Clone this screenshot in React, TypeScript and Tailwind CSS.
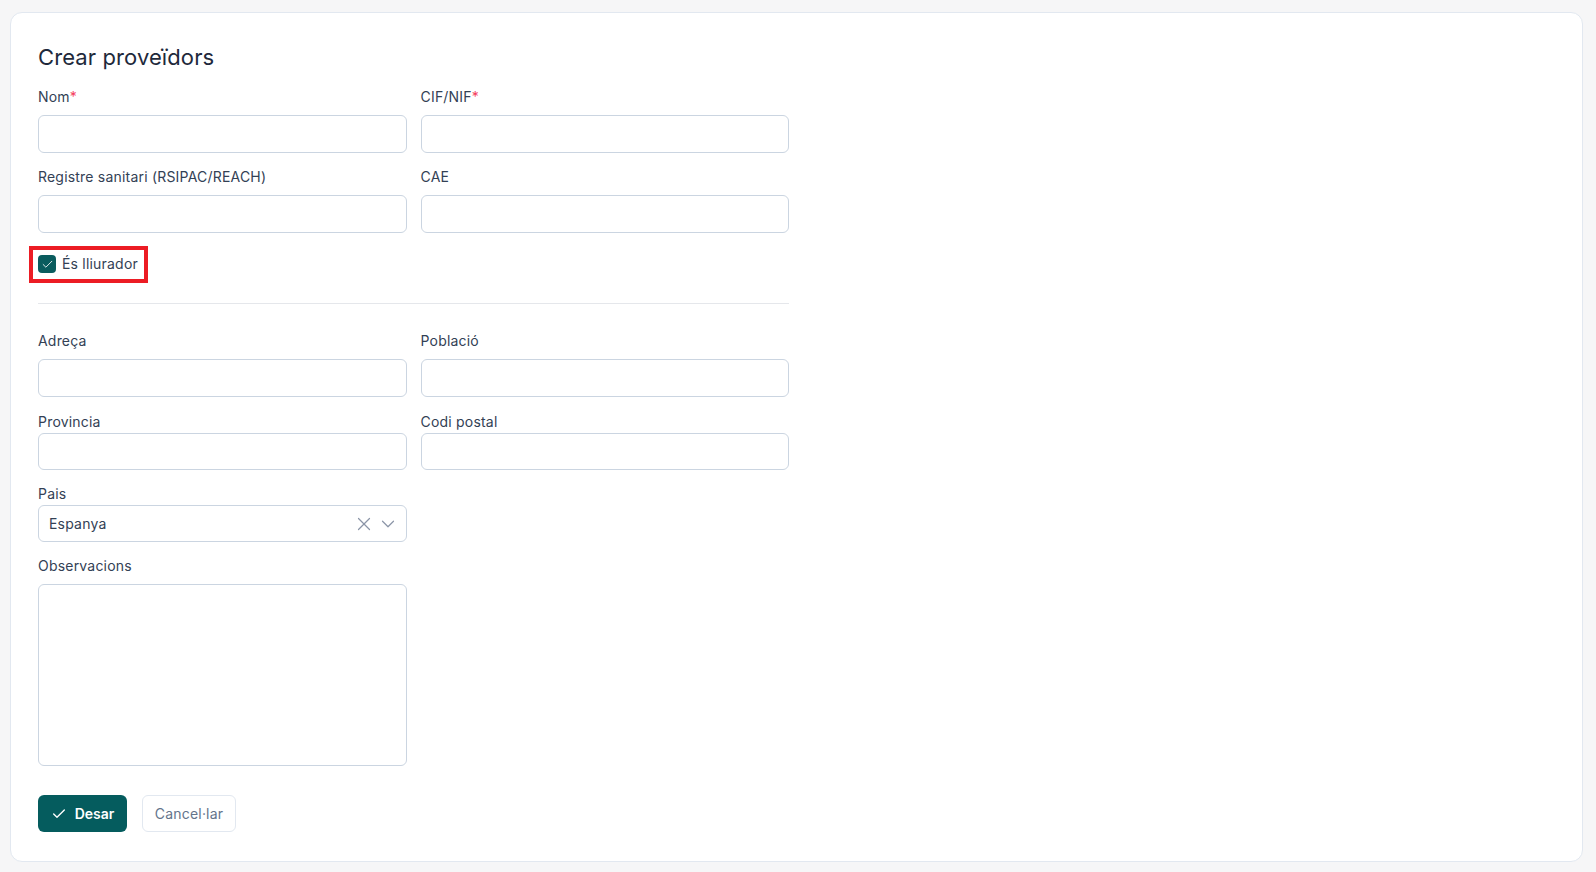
import React from 'react';
import { Check, X, ChevronDown } from 'lucide-react';

const font = { fontFamily: 'Inter, "Noto Sans", sans-serif' };

const Label = ({ text, required, tight }: { text: string; required?: boolean; tight?: boolean }) => (
  <label className={`block h-5 text-[14px] leading-5 tracking-[0.2px] text-[#334155] ${tight ? 'mb-px' : 'mb-2'}`}>
    {text}
    {required && <span className="text-[#f43f5e]">*</span>}
  </label>
);

const Input = ({ h = 'h-[38px]' }: { h?: string }) => (
  <input
    type="text"
    className={`block w-full ${h} rounded-md border border-[#cbd5e1] bg-white px-3 text-[14px] text-[#334155] outline-none`}
  />
);

const Field = ({ label, required, tight }: { label: string; required?: boolean; tight?: boolean }) => (
  <div>
    <Label text={label} required={required} tight={tight} />
    <Input h={tight ? 'h-[37px]' : 'h-[38px]'} />
  </div>
);

export default function App() {
  return (
    <div className="min-h-screen bg-[#f6f6f7] pl-[10px] pr-[13px] pt-[12px] pb-[12px]" style={font}>
      <div className="rounded-xl border border-[#e2e8f0] bg-white px-[27px] pt-[30px] pb-[29px]">
        <h1 className="h-7 text-[22px] leading-7 tracking-[0.1px] text-[#1e293b]">Crear proveïdors</h1>

        <div className="mt-4 w-[751px]">
          <div className="grid grid-cols-2 gap-x-[14px] gap-y-[14px]">
            <Field label="Nom" required />
            <Field label="CIF/NIF" required />
            <Field label="Registre sanitari (RSIPAC/REACH)" />
            <Field label="CAE" />
          </div>

          {/* Supplier flag */}
          <div className="relative mt-[21px] flex h-5 w-fit items-center gap-[6px]">
            <span className="flex h-[18px] w-[18px] items-center justify-center rounded-[4px] bg-[#0a5c5e]">
              <Check className="h-[13px] w-[13px] text-white" strokeWidth={1.6} />
            </span>
            <span className="text-[14px] leading-5 tracking-[0.2px] text-[#334155]">És lliurador</span>
            <span className="pointer-events-none absolute -left-[9px] -top-[8px] h-[37px] w-[119px] border-4 border-[#ec1c24]" />
          </div>

          <hr className="mt-[29px] border-t border-[#e5e7eb]" />

          <div className="mt-[27px] grid grid-cols-2 gap-x-[14px] gap-y-[15px]">
            <Field label="Adreça" />
            <Field label="Població" />
            <Field label="Provincia" tight />
            <Field label="Codi postal" tight />
          </div>

          <div className="mt-[14px] grid grid-cols-2 gap-x-[14px]">
            <div>
              <Label text="Pais" tight />
              <div className="flex h-[37px] items-center rounded-md border border-[#cbd5e1] bg-white pl-[10px] pr-[7px]">
                <span className="flex-1 text-[14px] tracking-[0.2px] text-[#334155]">Espanya</span>
                <X className="h-[22px] w-[22px] text-[#8b95a7]" strokeWidth={1.3} />
                <ChevronDown className="ml-[2px] h-[22px] w-[22px] text-[#8b95a7]" strokeWidth={1.3} />
              </div>
            </div>
          </div>

          <div className="mt-[14px] grid grid-cols-2 gap-x-[14px]">
            <div>
              <Label text="Observacions" />
              <textarea className="block h-[182px] w-full resize-none rounded-md border border-[#cbd5e1] bg-white p-3 text-[14px] outline-none" />
            </div>
          </div>

          <div className="mt-[29px] flex items-center gap-[15px]">
            <button className="flex h-[37px] w-[89px] items-center justify-center gap-[8px] rounded-md bg-[#055c5e] text-[14px] font-semibold text-white">
              <Check className="h-[16px] w-[16px]" strokeWidth={2} />
              Desar
            </button>
            <button className="flex h-[37px] w-[94px] items-center justify-center rounded-md border border-[#e2e8f0] bg-white text-[14px] tracking-[0.2px] text-[#64748b]">
              Cancel·lar
            </button>
          </div>
        </div>
      </div>
    </div>
  );
}
